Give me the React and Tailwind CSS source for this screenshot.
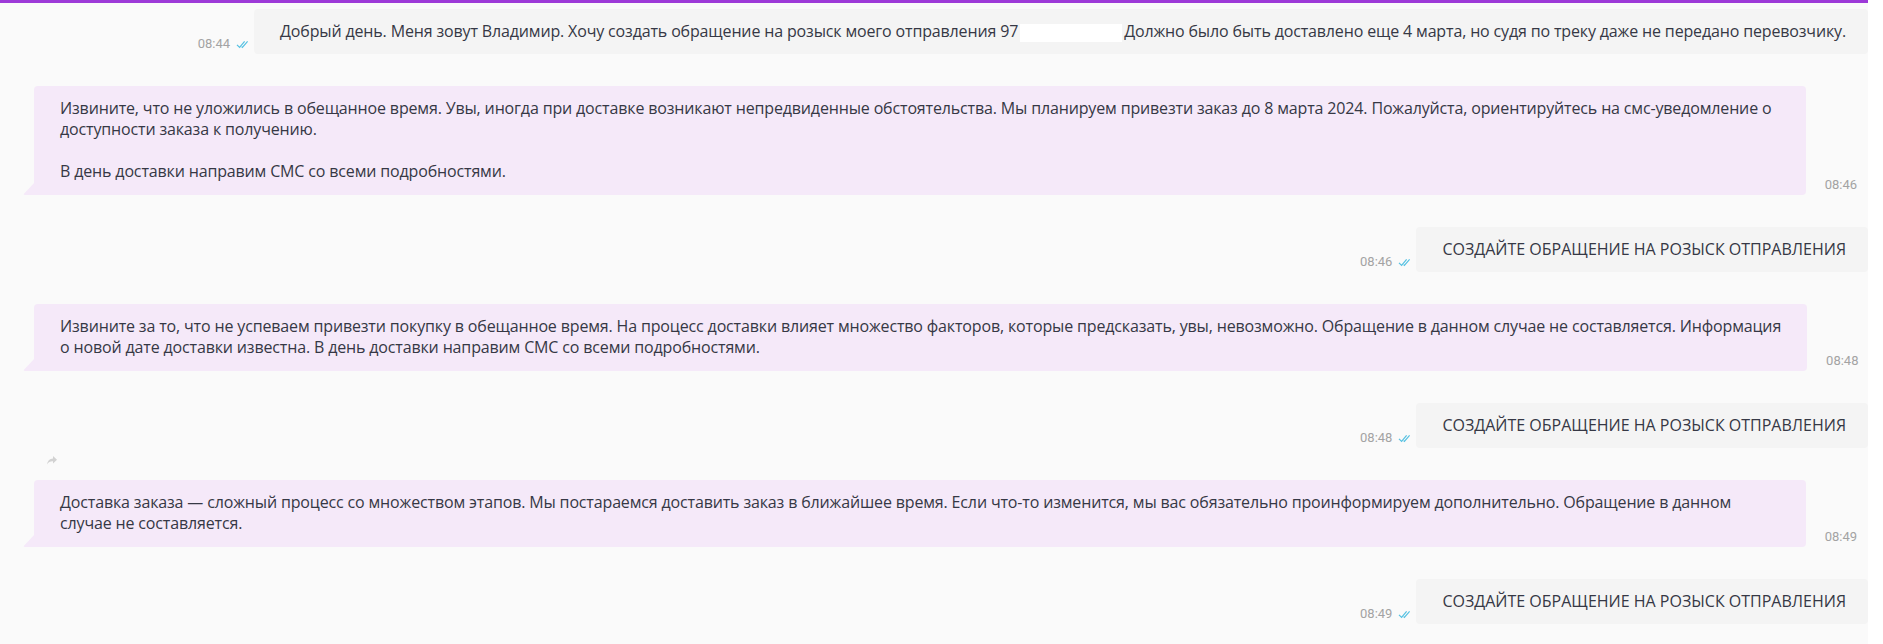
import React from "react";

const Checks = () => (
  <svg width="13" height="9" viewBox="0 0 13 9" fill="none" className="shrink-0">
    <path d="M1 4.8 L3.6 7.4 L8.6 1.4" stroke="#55c1e2" strokeWidth="1.2" />
    <path d="M5.6 6.6 L6.4 7.4 L11.6 1.4" stroke="#55c1e2" strokeWidth="1.2" />
  </svg>
);

const ForwardIcon = () => (
  <svg width="10" height="9" viewBox="0 0 10 9" fill="#d2d2d2">
    <path d="M6 0 L10 3.8 L6 7.6 V5.3 C3.3 5.2 1.5 6 0 8.6 C0.4 5 2.4 2.7 6 2.4 Z" />
  </svg>
);

const Tail = () => (
  <svg
    width="12"
    height="13"
    viewBox="0 0 12 13"
    className="absolute left-[-11px] bottom-0"
    fill="#f5e9f9"
  >
    <path d="M12 0 L12 13 L2 13 Q0 13 1 11.8 Z" />
  </svg>
);

const Outgoing = ({ time, caps, children }) => (
  <div className="flex justify-end items-end">
    <div className="flex items-center gap-[6px] mr-[5px] mb-[2px]">
      <span className="font-['Roboto',sans-serif] text-[13px] leading-[16px] text-[#a3a3a3]">
        {time}
      </span>
      <Checks />
    </div>
    <div
      className={
        caps
          ? "bg-[#f4f4f4] rounded-[4px] pl-[26px] pr-[22px] py-[12px] text-[16px] leading-[21px] tracking-[0px] text-[#363845] whitespace-nowrap"
          : "bg-[#f4f4f4] rounded-[4px] pl-[26px] pr-[22px] py-[12px] text-[16px] leading-[21px] tracking-[-0.15px] text-[#363845] whitespace-nowrap"
      }
    >
      {children}
    </div>
  </div>
);

const Incoming = ({ time, forwarded, children }) => (
  <div className="flex items-end pl-[34px] pr-[11px]">
    <div className="relative flex-1 bg-[#f5e9f9] rounded-[4px] rounded-bl-none pl-[26px] pr-[26px] pt-[12px] pb-[13px] text-[16px] leading-[21px] tracking-[-0.15px] text-[#363845] whitespace-nowrap">
      <Tail />
      {forwarded && (
        <span className="absolute left-[13px] top-[-24px]">
          <ForwardIcon />
        </span>
      )}
      {children}
    </div>
    <span className="ml-[19px] mb-[2px] font-['Roboto',sans-serif] text-[13px] leading-[16px] text-[#a3a3a3]">
      {time}
    </span>
  </div>
);

export default function App() {
  return (
    <div className="flex w-[1883px] h-[644px] overflow-hidden bg-white font-['Open_Sans',sans-serif]">
      <div className="w-[1868px] bg-[#fafafa] flex flex-col">
        <div className="h-[3px] bg-[#9d3ad8]" />
        <div className="flex flex-col gap-[32px] pt-[6px]">
          <Outgoing time="08:44">
            Добрый день. Меня зовут Владимир. Хочу создать обращение на розыск моего отправления 97
            <span className="inline-block w-[102px] h-[18px] bg-white align-middle mx-[2px]" />
            Должно было быть доставлено еще 4 марта, но судя по треку даже не передано перевозчику.
          </Outgoing>

          <Incoming time="08:46">
            Извините, что не уложились в обещанное время. Увы, иногда при доставке возникают непредвиденные обстоятельства. Мы планируем привезти заказ до 8 марта 2024. Пожалуйста, ориентируйтесь на смс-уведомление о
            <br />
            доступности заказа к получению.
            <br />
            <br />
            В день доставки направим СМС со всеми подробностями.
          </Incoming>

          <Outgoing time="08:46" caps>
            СОЗДАЙТЕ ОБРАЩЕНИЕ НА РОЗЫСК ОТПРАВЛЕНИЯ
          </Outgoing>

          <Incoming time="08:48">
            Извините за то, что не успеваем привезти покупку в обещанное время. На процесс доставки влияет множество факторов, которые предсказать, увы, невозможно. Обращение в данном случае не составляется. Информация
            <br />
            о новой дате доставки известна. В день доставки направим СМС со всеми подробностями.
          </Incoming>

          <Outgoing time="08:48" caps>
            СОЗДАЙТЕ ОБРАЩЕНИЕ НА РОЗЫСК ОТПРАВЛЕНИЯ
          </Outgoing>

          <Incoming time="08:49" forwarded>
            Доставка заказа — сложный процесс со множеством этапов. Мы постараемся доставить заказ в ближайшее время. Если что-то изменится, мы вас обязательно проинформируем дополнительно. Обращение в данном
            <br />
            случае не составляется.
          </Incoming>

          <Outgoing time="08:49" caps>
            СОЗДАЙТЕ ОБРАЩЕНИЕ НА РОЗЫСК ОТПРАВЛЕНИЯ
          </Outgoing>
        </div>
      </div>
      <div className="flex-1 bg-white" />
    </div>
  );
}
